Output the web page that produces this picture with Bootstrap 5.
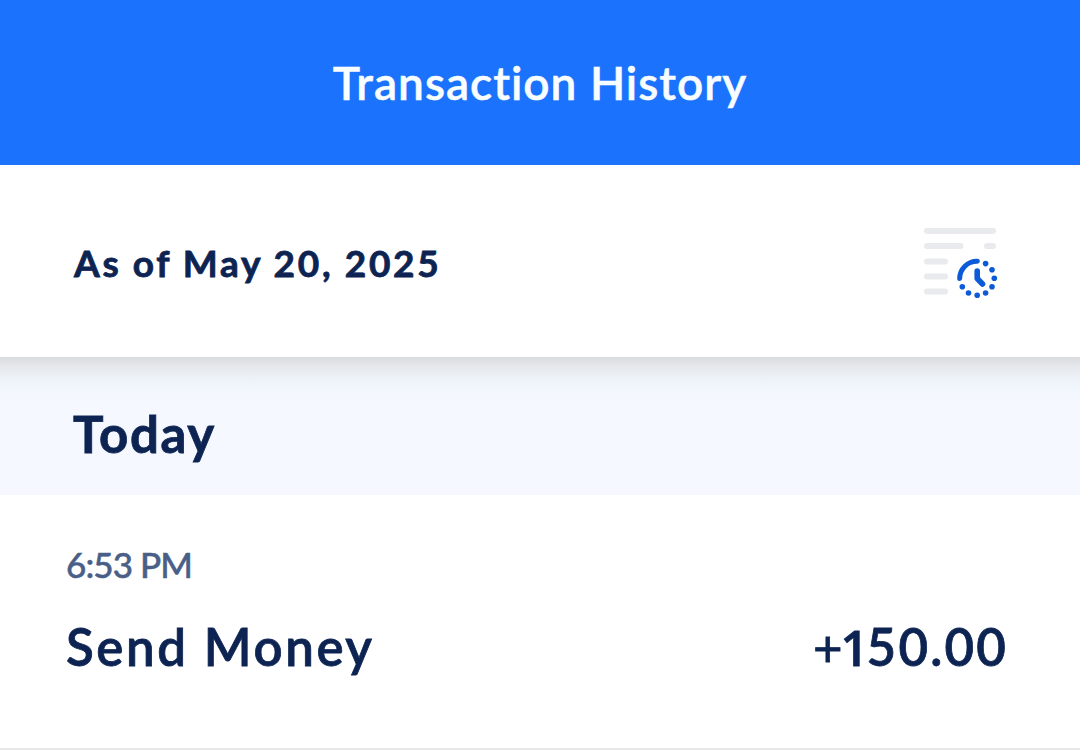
<!DOCTYPE html>
<html lang="en">
<head>
<meta charset="utf-8">
<meta name="viewport" content="width=device-width, initial-scale=1">
<title>Transaction History</title>
<link href="https://cdn.jsdelivr.net/npm/bootstrap@5.3.0/dist/css/bootstrap.min.css" rel="stylesheet">
<style>
body { font-family: Lato, "Liberation Sans", sans-serif; color: #0d2453; height: 756px; overflow: hidden; line-height: 1; }
h1, h2, h3, p { line-height: 60px; white-space: nowrap; -webkit-text-stroke: .8px currentColor; stroke-linejoin: round; }
.app-bar { height: 165px; background: #1b72fc; color: #f8fdff; padding-top: 53px; }
.app-bar h1 { font-size: 46px; font-weight: 600; letter-spacing: 1px; -webkit-text-stroke-width: .5px; }
.as-of { height: 192px; padding: 4px 82px 0 74px; }
.as-of h2 { font-size: 37px; font-weight: 700; letter-spacing: 2.75px; word-spacing: -.5px; }
.day { height: 138px; padding: 47px 74px 0 73px; background: linear-gradient(#d9dbde 0, #e5e8ec 9px, #edf2f8 21px, #f2f6fd 34px, #f5f9ff 48px); }
.day h2 { font-size: 51px; font-weight: 700; letter-spacing: 1.6px; }
.entry { height: 255px; padding: 39px 73px 0 66px; border-bottom: 2px solid #e8e8e8; }
.entry .time { font-size: 35px; font-weight: 500; color: #4a5f87; letter-spacing: -.9px; -webkit-text-stroke-width: .5px; }
.entry h3 { font-size: 51px; font-weight: 600; letter-spacing: 2.6px; }
.entry h3.amount { letter-spacing: 2.2px; margin-right: -1px; }
.amount .sign { font-weight: 400; letter-spacing: 0; }
.amount .slim { font-family: "Open Sans", sans-serif; font-size: 49px; letter-spacing: 0; line-height: 1; margin: 0 -2px 0 -2px; }
.entry .detail { margin-top: 23px; }
</style>
<script src="https://cdn.jsdelivr.net/npm/bootstrap@5.3.0/dist/js/bootstrap.bundle.min.js"></script>
</head>
<body class="bg-white">
<header class="app-bar text-center"><h1 class="mb-0">Transaction History</h1></header>
<main>
<section class="as-of d-flex align-items-center justify-content-between">
<h2 class="mb-0">As of May 20, 2025</h2>
<svg width="76" height="74" viewBox="922 226 76 74" style="overflow:visible" aria-hidden="true">
<g stroke="#e8eaee" stroke-width="6" stroke-linecap="round"><path d="M927 231H993M927 246H960.500M987 246H993M927 261.500H945M927 276.500H945M927 291.500H945"/></g>
<g fill="none" stroke="#0c5ad8" stroke-linecap="round" stroke-linejoin="round"><path stroke-width="5" d="M959.700 278.500A17.300 17.300 0 0 1 977.300 261.300"/><path stroke-width="5.600" d="M977.200 271V278.500L982.500 284"/></g>
<g fill="#0c5ad8"><circle cx="985.600" cy="263.600" r="2.800"/><circle cx="992" cy="269.800" r="2.800"/><circle cx="994.300" cy="278.300" r="2.800"/><circle cx="992" cy="286.800" r="2.800"/><circle cx="985.600" cy="293" r="2.800"/><circle cx="977.200" cy="295.300" r="2.800"/><circle cx="968.500" cy="293" r="2.800"/><circle cx="962.300" cy="286.800" r="2.800"/></g>
</svg>
</section>
<section class="day"><h2 class="mb-0">Today</h2></section>
<article class="entry">
<p class="time mb-0">6:53 PM</p>
<div class="detail d-flex justify-content-between"><h3 class="mb-0">Send Money</h3><h3 class="amount mb-0"><span class="sign">+</span><span class="slim">1</span>50.00</h3></div>
</article>
</main>
</body>
</html>
